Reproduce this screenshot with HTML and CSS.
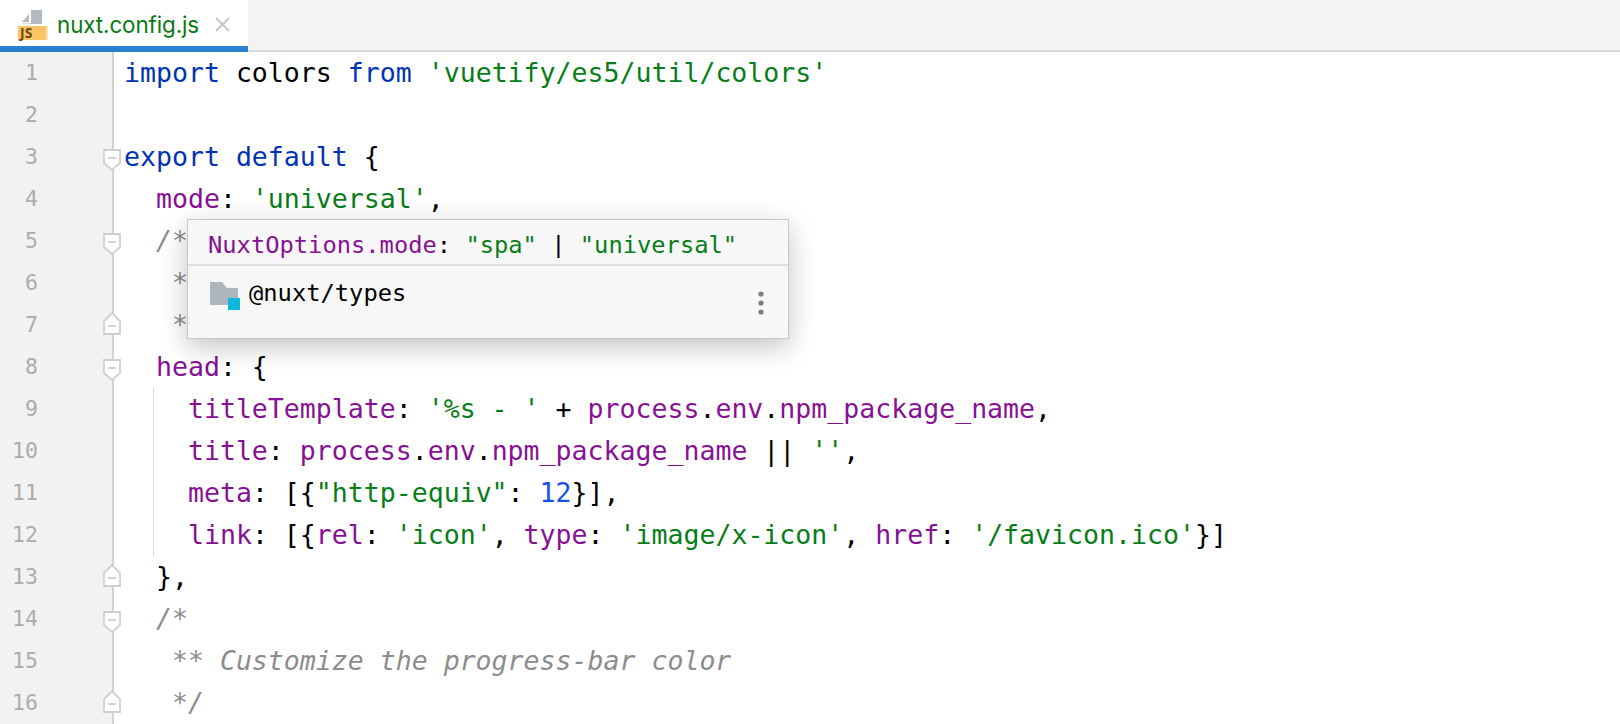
FILE: index.html
```html
<!DOCTYPE html>
<html lang="en">
<head>
<meta charset="utf-8">
<title>nuxt.config.js</title>
<link rel="stylesheet" href="styles.css">
</head>
<body>
<svg class="defs" width="0" height="0" aria-hidden="true">
  <symbol id="fold-start" viewBox="0 0 18 22"><path d="M1 1H17V14L9 21L1 14Z" fill="#fff" stroke="#cfcfcf" stroke-width="1.8"/><path d="M5 9H13" stroke="#cfcfcf" stroke-width="1.8"/></symbol>
  <symbol id="fold-end" viewBox="0 0 18 23"><path d="M1 22H17V9L9 1L1 9Z" fill="#fff" stroke="#cfcfcf" stroke-width="1.8"/><path d="M5 14H13" stroke="#cfcfcf" stroke-width="1.8"/></symbol>
</svg>
<header class="tabbar">
  <div class="tab">
    <svg class="file-icon" width="31" height="34" viewBox="0 0 31 34" aria-hidden="true">
      <path d="M4 12L11 4V12ZM13 0H24V14H4V13.500H13Z" fill="#b3b9be"/>
      <rect x="0" y="16" width="28" height="14" fill="#f8c566"/>
      <rect x="28" y="16" width="2" height="14" fill="#fbe0ae"/>
      <text x="2" y="28" class="js-label">JS</text>
    </svg>
    <span class="tab-name">nuxt.config.js</span>
    <svg class="close" width="15" height="15" viewBox="0 0 15 15" aria-hidden="true"><path d="M1 1L14 14M14 1L1 14" stroke="#c4c4c4" stroke-width="1.8"/></svg>
  </div>
</header>
<main class="editor">
  <div class="line"><div class="gutter"><span class="num">1</span></div><div class="code"><span class="k">import</span> colors <span class="k">from</span> <span class="s">'vuetify/es5/util/colors'</span></div></div>
  <div class="line"><div class="gutter"><span class="num">2</span></div><div class="code"></div></div>
  <div class="line"><div class="gutter"><span class="num">3</span><svg class="fold start"><use href="#fold-start"/></svg></div><div class="code"><span class="k">export default</span> {</div></div>
  <div class="line"><div class="gutter"><span class="num">4</span></div><div class="code">  <span class="p">mode</span>: <span class="s">'universal'</span>,</div></div>
  <div class="line"><div class="gutter"><span class="num">5</span><svg class="fold start"><use href="#fold-start"/></svg></div><div class="code">  <span class="c">/*</span></div></div>
  <div class="line"><div class="gutter"><span class="num">6</span></div><div class="code">   <span class="c">**</span></div></div>
  <div class="line"><div class="gutter"><span class="num">7</span><svg class="fold end"><use href="#fold-end"/></svg></div><div class="code">   <span class="c">*/</span></div></div>
  <div class="line"><div class="gutter"><span class="num">8</span><svg class="fold start"><use href="#fold-start"/></svg></div><div class="code">  <span class="p">head</span>: {</div></div>
  <div class="line"><div class="gutter"><span class="num">9</span></div><div class="code guide">    <span class="p">titleTemplate</span>: <span class="s">'%s - '</span> + <span class="p">process</span>.<span class="p">env</span>.<span class="p">npm_package_name</span>,</div></div>
  <div class="line"><div class="gutter"><span class="num">10</span></div><div class="code guide">    <span class="p">title</span>: <span class="p">process</span>.<span class="p">env</span>.<span class="p">npm_package_name</span> || <span class="s">''</span>,</div></div>
  <div class="line"><div class="gutter"><span class="num">11</span></div><div class="code guide">    <span class="p">meta</span>: [{<span class="s">"http-equiv"</span>: <span class="n">12</span>}],</div></div>
  <div class="line"><div class="gutter"><span class="num">12</span></div><div class="code guide">    <span class="p">link</span>: [{<span class="p">rel</span>: <span class="s">'icon'</span>, <span class="p">type</span>: <span class="s">'image/x-icon'</span>, <span class="p">href</span>: <span class="s">'/favicon.ico'</span>}]</div></div>
  <div class="line"><div class="gutter"><span class="num">13</span><svg class="fold end"><use href="#fold-end"/></svg></div><div class="code">  },</div></div>
  <div class="line"><div class="gutter"><span class="num">14</span><svg class="fold start"><use href="#fold-start"/></svg></div><div class="code">  <span class="c">/*</span></div></div>
  <div class="line"><div class="gutter"><span class="num">15</span></div><div class="code">   <span class="c">** Customize the progress-bar color</span></div></div>
  <div class="line"><div class="gutter"><span class="num">16</span><svg class="fold end"><use href="#fold-end"/></svg></div><div class="code">   <span class="c">*/</span></div></div>

  <aside class="tooltip">
    <div class="tip-sig"><span class="p">NuxtOptions.mode</span>: <span class="s">"spa"</span> | <span class="s">"universal"</span></div>
    <div class="tip-src">
      <svg class="folder" width="31" height="28" viewBox="0 0 31 28" aria-hidden="true">
        <path d="M1 0H13L18 6H29V23H1Z" fill="#adb6bd"/>
        <rect x="19" y="16" width="12" height="12" fill="#0db7e0"/>
      </svg>
      <span class="tip-pkg">@nuxt/types</span>
      <svg class="kebab" width="6" height="24" viewBox="0 0 6 24" aria-hidden="true"><circle cx="3" cy="3" r="2.6" fill="#7d7d7d"/><circle cx="3" cy="12" r="2.6" fill="#7d7d7d"/><circle cx="3" cy="21" r="2.6" fill="#7d7d7d"/></svg>
    </div>
  </aside>
</main>
</body>
</html>
```
FILE: styles.css
```css
* { box-sizing: border-box; }
html, body { margin: 0; height: 100%; overflow: hidden; background: #fff; }
.defs { position: absolute; }

.tabbar {
  height: 52px;
  background: #f3f3f3;
  border-bottom: 2px solid #d9d9d9;
  display: flex;
}
.tab {
  width: 248px;
  height: 52px;
  background: #fff;
  border-bottom: 6px solid #2a80d0;
  display: flex;
  align-items: flex-start;
  padding: 10px 0 0 18px;
}
.file-icon { flex: none; }
.js-label { font: 700 14px "Open Sans", sans-serif; fill: #6b4a12; }
.tab-name {
  margin-left: 8px;
  font: 22.4px/29px "Inter", "Open Sans", sans-serif;
  color: #0a7a14;
  letter-spacing: -0.1px;
  white-space: nowrap;
}
.close { margin: 7px 0 0 16px; flex: none; }

.editor {
  position: relative;
  height: 672px;
  font-family: "DejaVu Sans Mono", monospace;
}
.line { display: flex; height: 42px; }
.gutter {
  position: relative;
  width: 114px;
  flex: none;
  background: #f2f2f2;
  border-right: 2px solid #d2d2d2;
}
.num {
  display: block;
  width: 38px;
  text-align: right;
  font: 21.5px/42px "DejaVu Sans Mono", monospace;
  color: #acacac;
}
.fold { position: absolute; left: 103px; width: 18px; }
.fold.start { top: 13px; height: 22px; }
.fold.end { top: 8px; height: 23px; }
.code {
  position: relative;
  flex: 1;
  padding-left: 10px;
  font-size: 26.55px;
  line-height: 42px;
  color: #000;
  white-space: pre;
}
.code.guide::before {
  content: "";
  position: absolute;
  left: 39px;
  top: 0;
  bottom: 0;
  width: 1px;
  background: #d8d8d8;
}
.k { color: #0033b3; }
.s { color: #067d17; }
.p { color: #871094; }
.n { color: #1750eb; }
.c { color: #8c8c8c; font-style: italic; }

.tooltip {
  position: absolute;
  left: 187px;
  top: 167px;
  width: 602px;
  height: 120px;
  background: #f7f7f7;
  border: 1px solid #c6c6c6;
  box-shadow: 0 8px 26px rgba(0, 0, 0, 0.24);
  font-size: 23.75px;
  color: #000;
}
.tip-sig {
  height: 46px;
  padding-left: 20px;
  line-height: 50px;
  border-bottom: 2px solid #dedede;
  white-space: pre;
}
.tip-src {
  position: relative;
  display: flex;
  align-items: flex-start;
  padding: 16px 24px 0 21px;
}
.folder { flex: none; }
.tip-pkg { margin-left: 9px; margin-top: -4px; line-height: 30px; flex: 1; }
.kebab { margin-top: 9px; flex: none; }
```
